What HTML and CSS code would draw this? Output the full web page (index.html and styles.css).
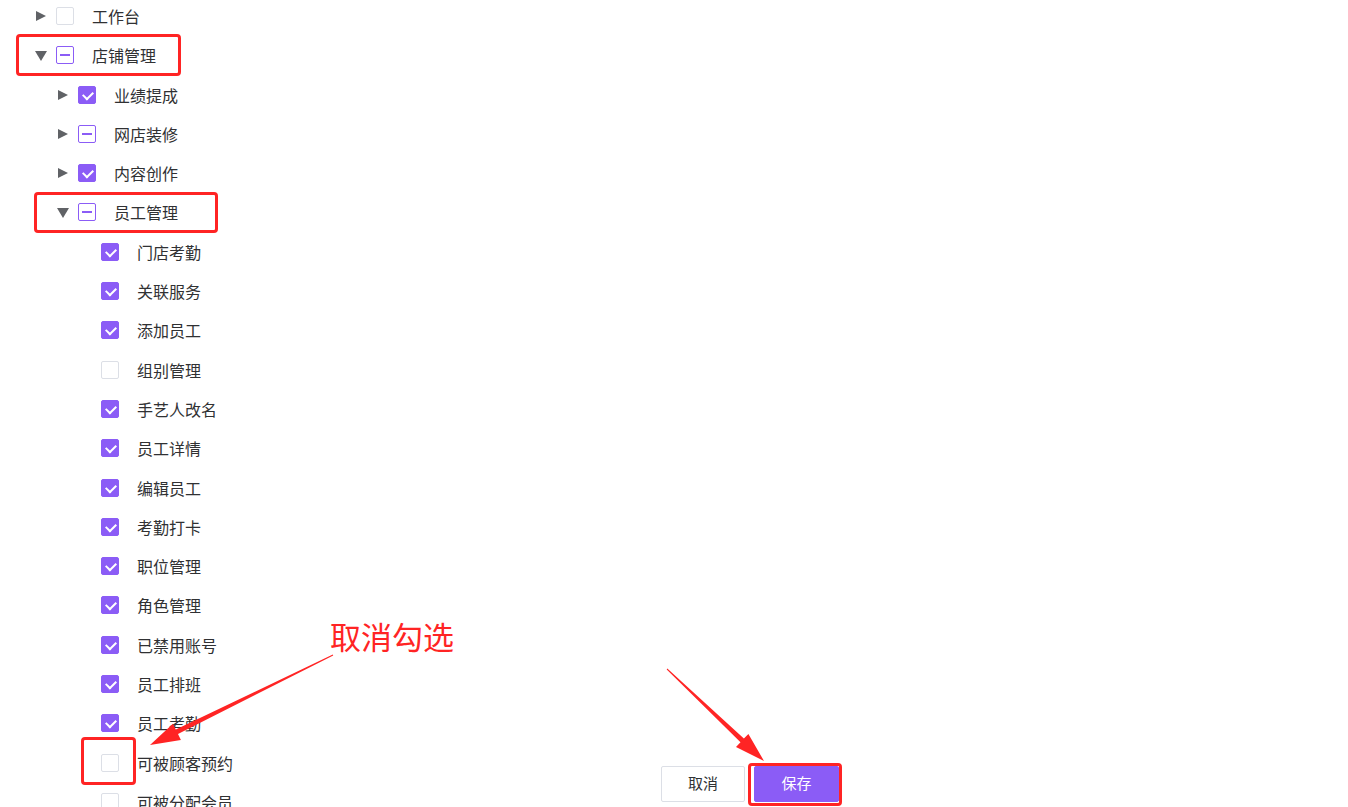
FILE: index.html
```html
<!DOCTYPE html>
<html lang="zh">
<head>
<meta charset="utf-8">
<link rel="stylesheet" href="styles.css">
</head>
<body>
<div class="page">
  <div class="tree">
    <div class="row l0"><span class="exp right"></span><span class="cb"></span><span class="label">工作台</span></div>
    <div class="row l0"><span class="exp down"></span><span class="cb ind"></span><span class="label">店铺管理</span></div>
    <div class="row l1"><span class="exp right"></span><span class="cb on"></span><span class="label">业绩提成</span></div>
    <div class="row l1"><span class="exp right"></span><span class="cb ind"></span><span class="label">网店装修</span></div>
    <div class="row l1"><span class="exp right"></span><span class="cb on"></span><span class="label">内容创作</span></div>
    <div class="row l1"><span class="exp down"></span><span class="cb ind"></span><span class="label">员工管理</span></div>
    <div class="row l2"><span class="exp"></span><span class="cb on"></span><span class="label">门店考勤</span></div>
    <div class="row l2"><span class="exp"></span><span class="cb on"></span><span class="label">关联服务</span></div>
    <div class="row l2"><span class="exp"></span><span class="cb on"></span><span class="label">添加员工</span></div>
    <div class="row l2"><span class="exp"></span><span class="cb"></span><span class="label">组别管理</span></div>
    <div class="row l2"><span class="exp"></span><span class="cb on"></span><span class="label">手艺人改名</span></div>
    <div class="row l2"><span class="exp"></span><span class="cb on"></span><span class="label">员工详情</span></div>
    <div class="row l2"><span class="exp"></span><span class="cb on"></span><span class="label">编辑员工</span></div>
    <div class="row l2"><span class="exp"></span><span class="cb on"></span><span class="label">考勤打卡</span></div>
    <div class="row l2"><span class="exp"></span><span class="cb on"></span><span class="label">职位管理</span></div>
    <div class="row l2"><span class="exp"></span><span class="cb on"></span><span class="label">角色管理</span></div>
    <div class="row l2"><span class="exp"></span><span class="cb on"></span><span class="label">已禁用账号</span></div>
    <div class="row l2"><span class="exp"></span><span class="cb on"></span><span class="label">员工排班</span></div>
    <div class="row l2"><span class="exp"></span><span class="cb on"></span><span class="label">员工考勤</span></div>
    <div class="row l2"><span class="exp"></span><span class="cb"></span><span class="label">可被顾客预约</span></div>
    <div class="row l2"><span class="exp"></span><span class="cb"></span><span class="label">可被分配会员</span></div>
  </div>

  <div class="footer">
    <button class="btn">取消</button>
    <button class="btn primary">保存</button>
  </div>

  <div class="mark m1"></div>
  <div class="mark m2"></div>
  <div class="mark m3"></div>
  <div class="mark m4"></div>
  <div class="note">取消勾选</div>
  <svg class="arrows" width="1348" height="807" viewBox="0 0 1348 807">
    <polygon points="333.2,655.4 178.0,734.0 180.9,739.9 150,745 172.9,723.7 175.8,729.6 332.8,654.6" fill="#ff2424"/>
    <polygon points="667.3,668.6 743.9,738.6 748.4,733.9 764,761 736.0,746.9 740.5,742.2 666.7,669.4" fill="#ff2424"/>
  </svg>
</div>
</body>
</html>
```

FILE: styles.css
```css
html, body {
  margin: 0;
  padding: 0;
  background: #fff;
  overflow: hidden;
}
body {
  font-family: "Noto Sans CJK SC", "Noto Sans", sans-serif;
  color: #303133;
}
.page {
  position: relative;
  width: 1348px;
  height: 807px;
  overflow: hidden;
}
.tree {
  margin-top: -3.65px;
}
.row {
  display: flex;
  align-items: center;
  height: 39.3px;
  box-sizing: border-box;
}
.row.l0 { padding-left: 30px; }
.row.l1 { padding-left: 52px; }
.row.l2 { padding-left: 75px; }
.exp {
  width: 22px;
  height: 18px;
  flex: none;
  position: relative;
}
.exp.right::before {
  content: "";
  position: absolute;
  left: 6px;
  top: 4px;
  border-style: solid;
  border-width: 5px 0 5px 10px;
  border-color: transparent transparent transparent #606266;
}
.exp.down::before {
  content: "";
  position: absolute;
  left: 5px;
  top: 5px;
  border-style: solid;
  border-width: 10px 6px 0 6px;
  border-color: #606266 transparent transparent transparent;
}
.cb {
  width: 18px;
  height: 18px;
  flex: none;
  margin-left: 4px;
  box-sizing: border-box;
  border: 1px solid #dcdfe6;
  border-radius: 2px;
  background: #fff;
  position: relative;
}
.cb.on {
  background: #8b5cf6;
  border-color: #8b5cf6;
}
.cb.on::after {
  content: "";
  position: absolute;
  left: 3.5px;
  top: 4px;
  width: 8px;
  height: 5px;
  border-left: 2px solid #fff;
  border-bottom: 2px solid #fff;
  transform: rotate(-45deg);
  transform-origin: center;
}
.cb.ind {
  border-color: #8b5cf6;
}
.cb.ind::after {
  content: "";
  position: absolute;
  left: 3px;
  right: 3px;
  top: 7px;
  height: 2px;
  background: #8b5cf6;
}
.label {
  margin-left: 18px;
  font-size: 16px;
  line-height: 20px;
  color: #303133;
  white-space: nowrap;
}
.footer {
  position: absolute;
  left: 661px;
  top: 766px;
  display: flex;
  gap: 9px;
}
.btn {
  font-family: "Noto Sans CJK SC", "Noto Sans", sans-serif;
  font-size: 15px;
  height: 36px;
  width: 84px;
  border: 1px solid #dcdfe6;
  border-radius: 2px;
  background: #fff;
  color: #303133;
  padding: 0 0 4px 0;
}
.btn.primary {
  background: #8b5cf6;
  border-color: #8b5cf6;
  color: #fff;
  width: 85px;
}
.mark {
  position: absolute;
  border: 3.5px solid #ff2424;
  border-radius: 4px;
  box-sizing: border-box;
}
.m1 { left: 16px; top: 34px; width: 165px; height: 42px; }
.m2 { left: 34px; top: 192px; width: 184px; height: 41px; }
.m3 { left: 81px; top: 737px; width: 55px; height: 48px; }
.m4 { left: 748px; top: 763px; width: 94px; height: 43px; }
.note {
  position: absolute;
  left: 330px;
  top: 615px;
  font-size: 31px;
  line-height: 42px;
  color: #ff2424;
  white-space: nowrap;
}
.arrows {
  position: absolute;
  left: 0;
  top: 0;
  pointer-events: none;
}
```
